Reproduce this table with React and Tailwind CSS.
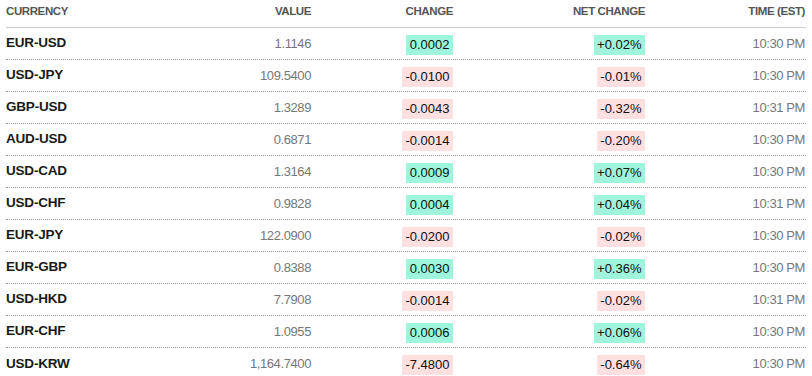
import React from "react";

const rows = [
  ["EUR-USD", "1.1146", "0.0002", "+0.02%", "10:30 PM", true],
  ["USD-JPY", "109.5400", "-0.0100", "-0.01%", "10:30 PM", false],
  ["GBP-USD", "1.3289", "-0.0043", "-0.32%", "10:31 PM", false],
  ["AUD-USD", "0.6871", "-0.0014", "-0.20%", "10:30 PM", false],
  ["USD-CAD", "1.3164", "0.0009", "+0.07%", "10:30 PM", true],
  ["USD-CHF", "0.9828", "0.0004", "+0.04%", "10:31 PM", true],
  ["EUR-JPY", "122.0900", "-0.0200", "-0.02%", "10:30 PM", false],
  ["EUR-GBP", "0.8388", "0.0030", "+0.36%", "10:30 PM", true],
  ["USD-HKD", "7.7908", "-0.0014", "-0.02%", "10:31 PM", false],
  ["EUR-CHF", "1.0955", "0.0006", "+0.06%", "10:30 PM", true],
  ["USD-KRW", "1,164.7400", "-7.4800", "-0.64%", "10:30 PM", false],
];

const grid = "grid grid-cols-[150px_155px_142px_192px_160px]";

function Badge({ up, children }) {
  return (
    <span
      className={`inline-block h-[20px] leading-[20px] px-[3.5px] text-[13px] text-[#111] ${
        up ? "bg-[#9ef5dc]" : "bg-[#ffe0e0]"
      }`}
    >
      {children}
    </span>
  );
}

export default function App() {
  return (
    <div
      className="bg-white w-[812px] h-[376px] overflow-hidden pl-[6px]"
      style={{ fontFamily: '"Liberation Sans", Arial, sans-serif' }}
    >
      <div className="w-[800px]">
        <div
          className={`${grid} h-[28px] items-center border-b border-[#cccccc] text-[11.5px] font-bold text-[#555] tracking-[-0.4px] pb-[4px]`}
        >
          <div>CURRENCY</div>
          <div className="text-right">VALUE</div>
          <div className="text-right">CHANGE</div>
          <div className="text-right">NET CHANGE</div>
          <div className="text-right">TIME (EST)</div>
        </div>
        {rows.map((r, i) => (
          <div
            key={r[0]}
            className={`${grid} h-[32px] items-center ${
              i < rows.length - 1 ? "border-b border-dotted border-[#999]" : ""
            }`}
          >
            <div className="text-[13.5px] font-bold text-[#1a1a1a] tracking-[-0.2px]">
              {r[0]}
            </div>
            <div className="text-right text-[13px] text-[#777] tracking-[-0.4px]">
              {r[1]}
            </div>
            <div className="text-right">
              <Badge up={r[5]}>{r[2]}</Badge>
            </div>
            <div className="text-right">
              <Badge up={r[5]}>{r[3]}</Badge>
            </div>
            <div className="text-right text-[13px] text-[#777] tracking-[-0.4px]">
              {r[4]}
            </div>
          </div>
        ))}
      </div>
    </div>
  );
}
